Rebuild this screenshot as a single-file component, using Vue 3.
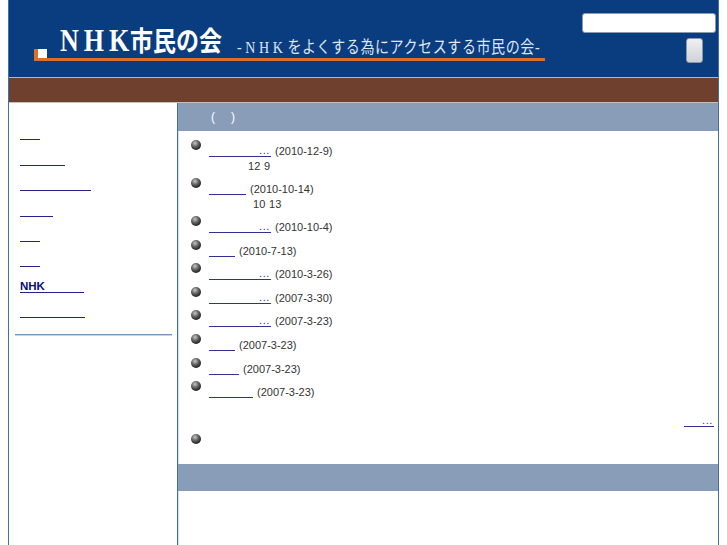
<script setup>
const nav = [
  { w: 20 }, { w: 45 }, { w: 71 }, { w: 33 }, { w: 20 }, { w: 20 },
  { w: 64, label: 'NHK' }, { w: 65 }
]
const news = [
  { w: 62, more: true, date: '(2010-12-9)', sub: '12 9', indent: 39 },
  { w: 37, date: '(2010-10-14)', sub: '10 13', indent: 44 },
  { w: 62, more: true, date: '(2010-10-4)' },
  { w: 26, date: '(2010-7-13)' },
  { w: 62, more: true, date: '(2010-3-26)' },
  { w: 62, more: true, date: '(2007-3-30)' },
  { w: 62, more: true, date: '(2007-3-23)' },
  { w: 26, date: '(2007-3-23)' },
  { w: 30, date: '(2007-3-23)' },
  { w: 44, date: '(2007-3-23)' }
]
</script>

<template>
  <div class="page">
    <header class="header">
      <div class="brand">
        <div class="titles">
          <span class="title"><span class="latin">NHK</span>市民の会</span>
          <span class="tagline"><span class="tag-latin">-NHK</span>をよくする為にアクセスする市民の会-</span>
        </div>
        <div class="rule"><i class="square"></i></div>
      </div>
      <form class="search" @submit.prevent>
        <input class="search-input" type="text" />
        <button class="search-button" type="submit"></button>
      </form>
    </header>
    <div class="band"></div>
    <div class="body">
      <aside class="side">
        <ul class="nav">
          <li v-for="(item, i) in nav" :key="i">
            <a class="nav-link" :style="{ width: item.w + 'px' }">{{ item.label }}</a>
          </li>
        </ul>
        <div class="side-rule"></div>
      </aside>
      <main class="main">
        <h2 class="bar-title"><span>(</span><span>)</span></h2>
        <ul class="news">
          <li v-for="(item, i) in news" :key="i" class="news-item">
            <i class="ball"></i>
            <div class="news-text">
              <div class="news-line">
                <a class="news-link" :style="{ width: item.w + 'px' }"><template v-if="item.more">...</template></a>
                <span class="date">{{ item.date }}</span>
              </div>
              <div v-if="item.sub" class="sub" :style="{ paddingLeft: item.indent + 'px' }">{{ item.sub }}</div>
            </div>
          </li>
        </ul>
        <div class="more"><a class="more-link">...</a></div>
        <div class="lone"><i class="ball"></i></div>
        <div class="bar-bottom"></div>
      </main>
    </div>
  </div>
</template>

<style>
html, body { margin: 0; background: #fff; }
</style>

<style scoped>
.page {
  box-sizing: border-box;
  width: 711px;
  height: 545px;
  margin-left: 8px;
  border-left: 1px solid #3f6fae;
  border-right: 1px solid #3f6fae;
  font-family: "Liberation Sans", "Noto Sans CJK JP", sans-serif;
  font-size: 11px;
  color: #333;
  display: flex;
  flex-direction: column;
  overflow: hidden;
}
.header {
  height: 77px;
  flex: none;
  background: #0a3c80;
  display: flex;
  justify-content: space-between;
  box-sizing: border-box;
  padding-top: 13px;
}
.brand { margin-left: 25px; width: 511px; }
.titles {
  height: 35px;
  margin-top: 10px;
  padding-left: 26px;
  display: flex;
  align-items: flex-end;
  color: #fff;
  white-space: nowrap;
}
.title {
  font-family: "Liberation Serif", "Noto Sans CJK JP", serif;
  font-size: 23px;
  font-weight: 700;
  line-height: 30px;
  width: 177px;
  transform: translateY(2px) scaleY(1.2);
  transform-origin: 0 85%;
}
.latin {
  font-size: 26px;
  letter-spacing: 5px;
  display: inline-block;
  width: 70px;
}
.tagline {
  font-family: "Liberation Serif", "Noto Sans CJK JP", serif;
  font-size: 14px;
  line-height: 22px;
  letter-spacing: 0.6px;
  color: #dde5f0;
  transform: translateY(3px) scaleY(1.2);
  transform-origin: 0 85%;
}
.tag-latin { letter-spacing: 3.6px; margin-right: 1px; }
.rule {
  position: relative;
  height: 3px;
  background: #d9702c;
}
.square {
  position: absolute;
  left: 4px;
  bottom: 3px;
  width: 9px;
  height: 9px;
  background: #fff;
  box-shadow: -4px 0 0 #d9702c;
}
.search {
  width: 134px;
  margin-right: 2px;
  display: flex;
  flex-direction: column;
  align-items: flex-end;
  gap: 5px;
}
.search-input {
  box-sizing: border-box;
  width: 134px;
  height: 20px;
  padding: 0;
  border: 1px solid #8b99ad;
  border-radius: 3px;
  background: #fff;
}
.search-button {
  box-sizing: border-box;
  width: 17px;
  height: 25px;
  margin-right: 13px;
  padding: 0;
  border: 1px solid #8b99ad;
  border-radius: 3px;
  background: linear-gradient(#f0f0f2, #cfd2d8);
}
.band {
  flex: none;
  height: 25px;
  box-sizing: border-box;
  background: #6f402e;
  border-top: 1px solid #a9b8cc;
  box-shadow: 0 1px 0 #c4c0bc;
  margin-bottom: 1px;
}
.body { flex: 1; display: flex; min-height: 0; }
.side {
  box-sizing: border-box;
  width: 169px;
  flex: none;
  border-right: 1px solid #3f6fae;
  padding: 12px 5px 0 6px;
}
.nav { list-style: none; margin: 0; padding: 0 0 0 5px; }
.nav li { height: 25.4px; display: flex; align-items: flex-end; }
.nav-link {
  box-sizing: border-box;
  display: block;
  height: 14px;
  line-height: 14px;
  border-bottom: 1px solid #232390;
  color: #0a0a80;
  font-size: 11.5px;
  font-weight: 700;
}
.side-rule { height: 1px; margin-top: 16px; background: #7593bd; box-shadow: 0 1px 0 #c8d3e4; }
.main {
  flex: 1;
  min-width: 0;
  background: linear-gradient(#d5deeb, #d5deeb) left top / 1px 100% no-repeat;
}
.bar-title {
  margin: 0;
  height: 28px;
  box-sizing: border-box;
  padding-left: 33px;
  display: flex;
  gap: 16px;
  align-items: center;
  background: #8a9db8;
  color: #fff;
  font-size: 12px;
  font-weight: 400;
}
.news { list-style: none; margin: 8px 0 0; padding: 0 0 0 13px; }
.news-item { display: flex; min-height: 23.6px; }
.ball {
  flex: none;
  display: block;
  width: 10px;
  height: 10px;
  margin-top: 1px;
  border-radius: 50%;
  background: radial-gradient(circle at 40% 32%, #c8c8c8 0, #6a6a6a 35%, #222 72%, #0c0c0c 100%);
}
.news-text { margin-left: 8px; padding-top: 6px; }
.news-line { display: flex; align-items: flex-start; gap: 4px; height: 13px; }
.news-link {
  box-sizing: border-box;
  display: block;
  height: 12px;
  border-bottom: 1px solid #30309a;
  color: #30309a;
  text-align: right;
  font-size: 11px;
  line-height: 11px;
  letter-spacing: 0.6px;
  padding-right: 1px;
}
.date { line-height: 13px; }
.sub { line-height: 14px; font-size: 11px; letter-spacing: 0.2px; padding-top: 1px; padding-bottom: 4px; }
.more { display: flex; justify-content: flex-end; padding-right: 4px; margin-top: 10px; height: 14px; }
.more-link {
  box-sizing: border-box;
  width: 30px;
  height: 13px;
  border-bottom: 1px solid #30309a;
  color: #30309a;
  text-align: right;
  line-height: 12px;
  letter-spacing: 0.6px;
  padding-right: 1px;
}
.lone { padding: 5px 0 0 13px; height: 36px; box-sizing: border-box; }
.bar-bottom {
  height: 27px;
  background: #8a9db8;
}
</style>
